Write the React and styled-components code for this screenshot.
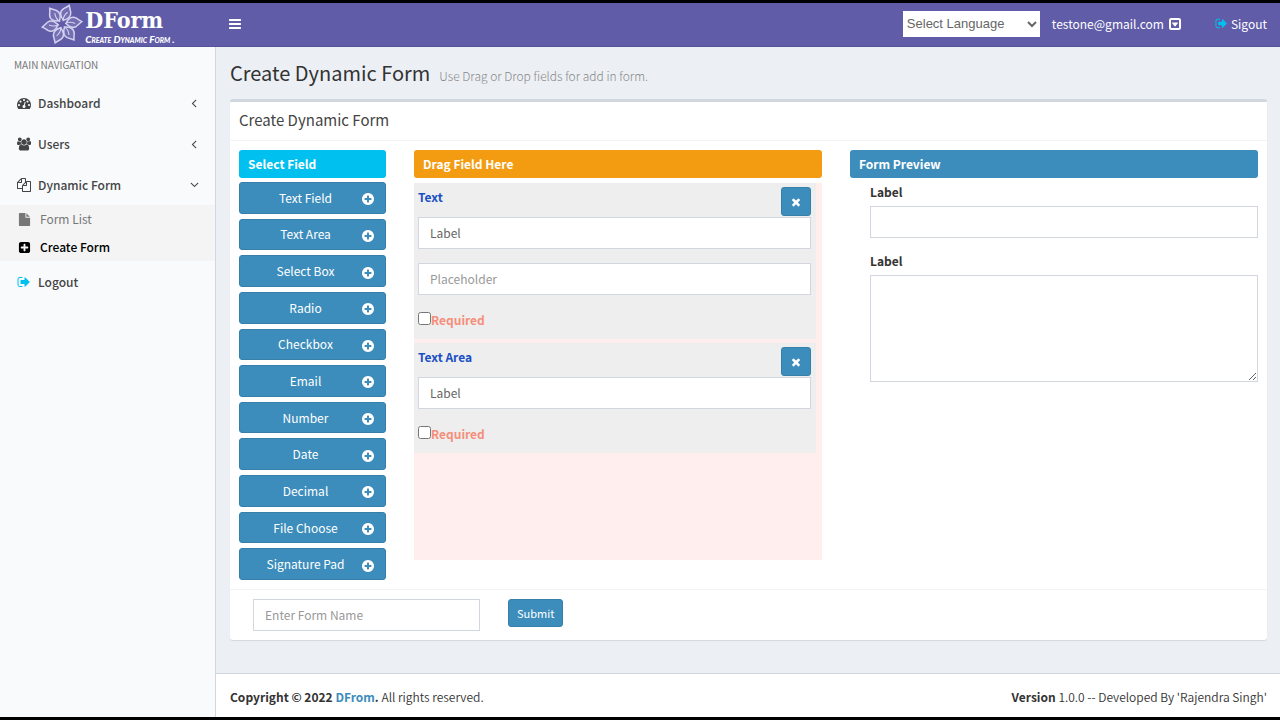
import { useState } from "react";
import styled, { createGlobalStyle, css } from "styled-components";

const GlobalStyle = createGlobalStyle`
  *, *::before, *::after {
    box-sizing: border-box;
  }
  body {
    margin: 0;
    background: #000;
    color: #333;
    font-family: "Noto Sans CJK SC", "Noto Sans", sans-serif;
    font-size: 12px;
    line-height: 18px;
  }
  h1, h2, h3, p, ul {
    margin: 0;
    padding: 0;
    list-style: none;
  }
  a {
    color: inherit;
    text-decoration: none;
  }
  button, input, textarea {
    font-family: inherit;
    font-size: inherit;
  }
`;

// Every glyph shares the 1792 unit grid
const paths = {
  bars: "M1664 1344v128q0 26-19 45t-45 19h-1408q-26 0-45-19t-19-45v-128q0-26 19-45t45-19h1408q26 0 45 19t19 45zm0-512v128q0 26-19 45t-45 19h-1408q-26 0-45-19t-19-45v-128q0-26 19-45t45-19h1408q26 0 45 19t19 45zm0-512v128q0 26-19 45t-45 19h-1408q-26 0-45-19t-19-45v-128q0-26 19-45t45-19h1408q26 0 45 19t19 45z",
  dashboard: "M384 1152q0-53-37.5-90.5t-90.5-37.5-90.5 37.5-37.5 90.5 37.5 90.5 90.5 37.5 90.5-37.5 37.5-90.5zm192-448q0-53-37.5-90.5t-90.5-37.5-90.5 37.5-37.5 90.5 37.5 90.5 90.5 37.5 90.5-37.5 37.5-90.5zm428 481l101-382q6-26-7.5-48.5t-38.5-29.5-48 6.5-30 39.5l-101 382q-60 5-107 43.5t-63 98.5q-20 77 20 146t117 89 146-20 89-117q16-60-6-117t-72-91zm660-33q0-53-37.5-90.5t-90.5-37.5-90.5 37.5-37.5 90.5 37.5 90.5 90.5 37.5 90.5-37.5 37.5-90.5zm-640-640q0-53-37.5-90.5t-90.5-37.5-90.5 37.5-37.5 90.5 37.5 90.5 90.5 37.5 90.5-37.5 37.5-90.5zm448 192q0-53-37.5-90.5t-90.5-37.5-90.5 37.5-37.5 90.5 37.5 90.5 90.5 37.5 90.5-37.5 37.5-90.5zm320 448q0 261-141 483-19 29-54 29h-1402q-35 0-54-29-141-221-141-483 0-182 71-348t191-286 286-191 348-71 348 71 286 191 191 286 71 348z",
  users: "M593 896q-162 5-265 128h-134q-82 0-138-40.5t-56-118.5q0-353 124-353 6 0 43.5 21t97.5 42.5 119 21.5q67 0 133-23-5 37-5 66 0 159 90 291zm1071 637q0 120-73 189.5t-194 69.5h-874q-121 0-194-69.5t-73-189.5q0-53 3.5-103.5t14-109 26.5-108.5 43-97.5 62-81 85.5-53.5 111.5-20q10 0 43 21.5t73 48 107 48 135 21.5 135-21.5 107-48 73-48 43-21.5q61 0 111.5 20t85.5 53.5 62 81 43 97.5 26.5 108.5 14 109 3.5 103.5zm-1024-1277q0 106-75 181t-181 75-181-75-75-181 75-181 181-75 181 75 75 181zm704 384q0 159-112.5 271.5t-271.5 112.5-271.5-112.5-112.5-271.5 112.5-271.5 271.5-112.5 271.5 112.5 112.5 271.5zm576 225q0 78-56 118.5t-138 40.5h-134q-103-123-265-128 90-132 90-291 0-29-5-66 66 23 133 23 59 0 119-21.5t97.5-42.5 43.5-21q124 0 124 353zm-128-609q0 106-75 181t-181 75-181-75-75-181 75-181 181-75 181 75 75 181z",
  files: "M1696 384q40 0 68 28t28 68v1216q0 40-28 68t-68 28h-960q-40 0-68-28t-28-68v-288h-544q-40 0-68-28t-28-68v-672q0-40 20-88t48-76l408-408q28-28 76-48t88-20h416q40 0 68 28t28 68v328q68-40 128-40h416zm-544 213l-299 299h299v-299zm-640-384l-299 299h299v-299zm196 647l316-316v-416h-384v416q0 40-28 68t-68 28h-416v640h512v-256q0-40 20-88t48-76zm956 804v-1152h-384v416q0 40-28 68t-68 28h-416v640h896z",
  file: "M1152 512v-472q22 14 36 28l408 408q14 14 28 36h-472zm-128 32q0 40 28 68t68 28h544v1056q0 40-28 68t-68 28h-1344q-40 0-68-28t-28-68v-1600q0-40 28-68t68-28h800v544z",
  plusSquare: "M1408 960v-128q0-26-19-45t-45-19h-320v-320q0-26-19-45t-45-19h-128q-26 0-45 19t-19 45v320h-320q-26 0-45 19t-19 45v128q0 26 19 45t45 19h320v320q0 26 19 45t45 19h128q26 0 45-19t19-45v-320h320q26 0 45-19t19-45zm256-544v960q0 119-84.5 203.5t-203.5 84.5h-960q-119 0-203.5-84.5t-84.5-203.5v-960q0-119 84.5-203.5t203.5-84.5h960q119 0 203.5 84.5t84.5 203.5z",
  signOut: "M704 1440q0 4 1 20t.5 26.5-3 23.5-10 19.5-20.5 6.5h-320q-119 0-203.5-84.5t-84.5-203.5v-704q0-119 84.5-203.5t203.5-84.5h320q13 0 22.5 9.5t9.5 22.5q0 4 1 20t.5 26.5-3 23.5-10 19.5-20.5 6.5h-320q-66 0-113 47t-47 113v704q0 66 47 113t113 47h312l11.5 1 11.5 3 8 5.5 7 9 2 13.5zm928-544q0 26-19 45l-544 544q-19 19-45 19t-45-19-19-45v-288h-448q-26 0-45-19t-19-45v-384q0-26 19-45t45-19h448v-288q0-26 19-45t45-19 45 19l544 544q19 19 19 45z",
  plusCircle: "M1344 960v-128q0-26-19-45t-45-19h-256v-256q0-26-19-45t-45-19h-128q-26 0-45 19t-19 45v256h-256q-26 0-45 19t-19 45v128q0 26 19 45t45 19h256v256q0 26 19 45t45 19h128q26 0 45-19t19-45v-256h256q26 0 45-19t19-45zm320-64q0 209-103 385.5t-279.5 279.5-385.5 103-385.5-103-279.5-279.5-103-385.5 103-385.5 279.5-279.5 385.5-103 385.5 103 279.5 279.5 103 385.5z",
  times: "M1490 1322q0 40-28 68l-136 136q-28 28-68 28t-68-28l-294-294-294 294q-28 28-68 28t-68-28l-136-136q-28-28-28-68t28-68l294-294-294-294q-28-28-28-68t28-68l136-136q28-28 68-28t68 28l294 294 294-294q28-28 68-28t68 28l136 136q28 28 28 68t-28 68l-294 294 294 294q28 28 28 68z",
  angle: "M1203 544q0 13-10 23l-393 393 393 393q10 10 10 23t-10 23l-50 50q-10 10-23 10t-23-10l-466-466q-10-10-10-23t10-23l466-466q10-10 23-10t23 10l50 50q10 10 10 23z",
  caretSquare: "M416 128h960q288 0 288 288v960q0 288-288 288h-960q-288 0-288-288v-960q0-288 288-288zm0 256q-32 0-32 32v960q0 32 32 32h960q32 0 32-32v-960q0-32-32-32zM576 704h640q90 0 40 90l-310 400q-50 50-100 0l-310-400q-50-90 40-90z",
};

const Svg = styled.svg`
  flex: none;
  width: ${ ({ $size }) => $size }px;
  height: ${ ({ $size }) => $size }px;
  fill: ${ ({ $color }) => $color || "currentColor" };
  transform: ${ ({ $turned }) => $turned ? "rotate(-90deg)" : "none" };
`;

const Icon = ({ name, size = 14, color, turned }) => (
  <Svg
    viewBox={ name === "users" ? "0 0 1920 1792" : "0 0 1792 1792" }
    $size={ size }
    $color={ color }
    $turned={ turned }
    aria-hidden="true"
  >
    <path fillRule={ name === "caretSquare" ? "evenodd" : "nonzero" } d={ paths[name] } />
  </Svg>
);

const Page = styled.div`
  min-height: 100vh;
  display: flex;
  flex-direction: column;
  border-top: 3px solid #000;
  border-bottom: 3px solid #000;
`;

const TopBar = styled.header`
  height: 44px;
  padding-bottom: 2px;
  display: flex;
  align-items: center;
  background: #605ca8;
  border-bottom: 1px solid #555299;
  color: #fff;
`;

const Brand = styled.a`
  width: 216px;
  display: flex;
  justify-content: center;
  align-items: center;
  gap: 2px;
`;

const BrandText = styled.span`
  display: flex;
  flex-direction: column;
`;

const BrandName = styled.span`
  font: bold 23px/30px "DejaVu Serif Condensed", "DejaVu Serif", serif;
`;

const BrandTag = styled.span`
  font: italic 900 10px/8px Lato, sans-serif;
  font-variant: small-caps;
`;

const MenuButton = styled.button`
  display: flex;
  padding: 12px;
  border: 0;
  background: none;
  color: #fff;
  cursor: pointer;
`;

const TopActions = styled.div`
  margin-left: auto;
  padding-right: 13px;
  display: flex;
  align-items: center;
`;

const LanguageSelect = styled.select`
  width: 137px;
  height: 26px;
  margin-right: 12px;
  border: 0;
  background: #fff;
  color: #666;
  font: 13px "Liberation Sans", sans-serif;
`;

const TopLink = styled.a`
  display: flex;
  align-items: center;
  gap: ${ ({ $gap }) => $gap }px;

  & + & {
    margin-left: 33px;
  }
`;

const Body = styled.div`
  flex: 1;
  display: flex;
`;

const Sidebar = styled.nav`
  flex: none;
  width: 216px;
  border-right: 1px solid #d2d6de;
  background: #f9fafc;
`;

const NavTitle = styled.h3`
  padding: 9px 14px 8px;
  color: #777;
  font-size: 10px;
  font-weight: 400;
`;

const NavLink = styled.a`
  height: 41px;
  padding: 0 14px 0 17px;
  display: flex;
  align-items: center;
  gap: 7px;
  color: #444;
  font-weight: 500;

  & > :nth-child(3) {
    margin-left: auto;
  }
`;

const SubMenu = styled.ul`
  background: #f4f4f5;
`;

const SubLink = styled.a`
  height: 28px;
  padding: 0 18px;
  display: flex;
  align-items: center;
  gap: 9px;
  color: #777;

  ${ ({ $active }) => $active && css`
    color: #000;
    font-weight: 500;
  ` }
`;

const Content = styled.div`
  flex: 1;
  min-width: 0;
  display: flex;
  flex-direction: column;
  background: #ecf0f5;
`;

const Main = styled.main`
  flex: 1;
  padding: 14px 13px 14px 14px;
`;

const PageTitle = styled.div`
  display: flex;
  align-items: baseline;
  gap: 9px;

  h1 {
    font-size: 20px;
    font-weight: 400;
    line-height: 24px;
  }
  p {
    color: #888;
    font-size: 12px;
    font-weight: 300;
  }
`;

const Box = styled.section`
  margin-top: 14px;
  border-top: 3px solid #d2d6de;
  border-radius: 3px;
  background: #fff;
  box-shadow: 0 1px 1px rgba(0, 0, 0, 0.1);
`;

const BoxTitle = styled.h2`
  height: 39px;
  padding: 0 9px;
  border-bottom: 1px solid #f4f4f4;
  color: #444;
  font-size: 15px;
  font-weight: 400;
  line-height: 36px;
`;

const Columns = styled.div`
  padding: 9px;
  display: grid;
  grid-template-columns: 147px 1fr 1fr;
  gap: 28px;
`;

const ColumnTitle = styled.h3`
  height: 28px;
  padding: 0 9px;
  border-radius: 3px;
  background: ${ ({ $color }) => $color };
  color: #fff;
  font-size: 12px;
  font-weight: 700;
  line-height: 28px;
`;

const buttonLook = css`
  border: 1px solid #367fa9;
  border-radius: 3px;
  background: #3c8dbc;
  color: #fff;
  cursor: pointer;
`;

const FieldList = styled.div`
  height: 398px;
  margin-top: 4px;
  display: grid;
  grid-auto-rows: 1fr;
  gap: 5px;
`;

const FieldButton = styled.button`
  ${ buttonLook }
  min-height: 0;
  padding: 0 10px;
  display: flex;
  align-items: center;
  line-height: 18px;

  span {
    flex: 1;
  }
  svg {
    margin-top: 3px;
  }
`;

const DropZone = styled.div`
  min-height: 377px;
  margin-top: 5px;
  padding-right: 6px;
  background: #ffeeed;
`;

const FieldCard = styled.div`
  padding: 4px 5px 10px 4px;
  background: #eee;

  & + & {
    margin-top: 4px;
  }
`;

const CardHead = styled.div`
  height: 30px;
  display: flex;
  justify-content: space-between;
  align-items: flex-start;
  color: #1b4fc4;
  font-weight: 700;
  line-height: 20px;
`;

const RemoveButton = styled.button`
  ${ buttonLook }
  width: 30px;
  height: 29px;
  padding: 0;
  display: flex;
  justify-content: center;
  align-items: center;
`;

const TextInput = styled.input`
  display: block;
  width: 100%;
  height: 32px;
  margin-bottom: 14px;
  padding: 0 11px 2px;
  border: 1px solid #d2d6de;
  border-radius: 0;
  background: #fff;
  color: #666;

  &::placeholder {
    color: #999;
    opacity: 1;
  }
`;

const Required = styled.label`
  height: 20px;
  display: flex;
  align-items: flex-start;
  color: #f58f7c;
  font-weight: 700;
  line-height: 22px;

  input {
    width: 13px;
    height: 13px;
    margin: 3px 0 0;
  }
`;

const Preview = styled.div`
  padding: 5px 0 0 20px;

  label {
    display: block;
    margin-bottom: 5px;
    font-weight: 700;
    line-height: 18px;
  }
`;

const PreviewArea = styled.textarea`
  display: block;
  width: 100%;
  height: 107px;
  border: 1px solid #d2d6de;
  resize: vertical;
`;

const BoxFooter = styled.form`
  padding: 9px 23px;
  display: flex;
  align-items: flex-start;
  gap: 28px;
  border-top: 1px solid #f4f4f4;

  ${ TextInput } {
    width: 227px;
    margin: 0;
  }
`;

const SubmitButton = styled.button`
  ${ buttonLook }
  height: 28px;
  padding: 0 8px 1px;
  font-size: 11px;
`;

const Footer = styled.footer`
  height: 44px;
  padding: 3px 13px 0 14px;
  display: flex;
  justify-content: space-between;
  align-items: center;
  border-top: 1px solid #d2d6de;
  background: #fff;
  color: #333;
  font-weight: 350;

  strong {
    font-weight: 700;
  }
  strong a {
    color: #3c8dbc;
  }
`;

const Flower = () => (
  <svg width="42" height="40" viewBox="-21 -20 42 40" fill="#fff" fillOpacity="0.12" stroke="#d3d1ee" strokeWidth="1.5" aria-hidden="true">
    { [21, 83, 143, 200, 261, 322].map(angle => (
      <g key={ angle } transform={ `rotate(${ angle })` }>
        <path d="M0-4C-5-7-7-11-4-15Q-2-17 0-20Q2-17 4-14C6-10 4-7 0-4z" />
        <path d="M0-3Q-2-8 1-13" strokeWidth="1.1" fill="none" />
      </g>
    )) }
  </svg>
);

const fieldTypes = [
  "Text Field", "Text Area", "Select Box", "Radio", "Checkbox", "Email",
  "Number", "Date", "Decimal", "File Choose", "Signature Pad",
];

const Card = ({ title, hasPlaceholder }) => {
  const [label, setLabel] = useState("Label");

  return (
    <FieldCard>
      <CardHead>
        { title }
        <RemoveButton type="button" aria-label={ `Remove ${ title }` }><Icon name="times" size={ 12 } /></RemoveButton>
      </CardHead>
      <TextInput aria-label="Label" value={ label } onChange={ e => setLabel(e.target.value) } />
      { hasPlaceholder && <TextInput aria-label="Placeholder" placeholder="Placeholder" /> }
      <Required><input type="checkbox" />Required</Required>
    </FieldCard>
  );
};

const App = () => (
  <Page>
    <GlobalStyle />
    <TopBar>
      <Brand href="#">
        <Flower />
        <BrandText>
          <BrandName>DForm</BrandName>
          <BrandTag>Create Dynamic Form .</BrandTag>
        </BrandText>
      </Brand>
      <MenuButton type="button" aria-label="Toggle navigation"><Icon name="bars" /></MenuButton>
      <TopActions>
        <LanguageSelect aria-label="Language">
          <option>Select Language</option>
        </LanguageSelect>
        <TopLink href="#" $gap={ 4 }>testone@gmail.com<Icon name="caretSquare" /></TopLink>
        <TopLink href="#" $gap={ 3 }><Icon name="signOut" color="#00c0ef" size={ 13 } />Sigout</TopLink>
      </TopActions>
    </TopBar>
    <Body>
      <Sidebar>
        <NavTitle>MAIN NAVIGATION</NavTitle>
        <NavLink href="#"><Icon name="dashboard" /><span>Dashboard</span><Icon name="angle" /></NavLink>
        <NavLink href="#"><Icon name="users" /><span>Users</span><Icon name="angle" /></NavLink>
        <NavLink href="#"><Icon name="files" /><span>Dynamic Form</span><Icon name="angle" turned /></NavLink>
        <SubMenu>
          <li><SubLink href="#"><Icon name="file" size={ 13 } />Form List</SubLink></li>
          <li><SubLink href="#" $active><Icon name="plusSquare" size={ 13 } />Create Form</SubLink></li>
        </SubMenu>
        <NavLink href="#"><Icon name="signOut" color="#00c0ef" /><span>Logout</span></NavLink>
      </Sidebar>
      <Content>
        <Main>
          <PageTitle>
            <h1>Create Dynamic Form</h1>
            <p>Use Drag or Drop fields for add in form.</p>
          </PageTitle>
          <Box>
            <BoxTitle>Create Dynamic Form</BoxTitle>
            <Columns>
              <div>
                <ColumnTitle $color="#00c0ef">Select Field</ColumnTitle>
                <FieldList>
                  { fieldTypes.map(type => (
                    <FieldButton key={ type } type="button"><span>{ type }</span><Icon name="plusCircle" /></FieldButton>
                  )) }
                </FieldList>
              </div>
              <div>
                <ColumnTitle $color="#f39c12">Drag Field Here</ColumnTitle>
                <DropZone>
                  <Card title="Text" hasPlaceholder />
                  <Card title="Text Area" />
                </DropZone>
              </div>
              <div>
                <ColumnTitle $color="#3c8dbc">Form Preview</ColumnTitle>
                <Preview>
                  <label htmlFor="preview-text">Label</label>
                  <TextInput id="preview-text" />
                  <label htmlFor="preview-area">Label</label>
                  <PreviewArea id="preview-area" />
                </Preview>
              </div>
            </Columns>
            <BoxFooter onSubmit={ e => e.preventDefault() }>
              <TextInput aria-label="Form name" placeholder="Enter Form Name" />
              <SubmitButton type="submit">Submit</SubmitButton>
            </BoxFooter>
          </Box>
        </Main>
        <Footer>
          <span><strong>Copyright © 2022 <a href="#">DFrom</a>.</strong> All rights reserved.</span>
          <span><strong>Version</strong> 1.0.0 -- Developed By 'Rajendra Singh'</span>
        </Footer>
      </Content>
    </Body>
  </Page>
);

export default App;
